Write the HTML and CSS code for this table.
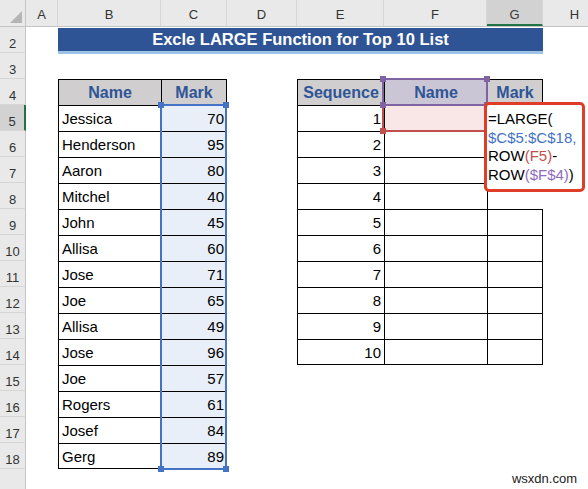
FILE: index.html
```html
<!DOCTYPE html>
<html lang="en">
<head>
<meta charset="utf-8">
<title>Excle LARGE Function for Top 10 List</title>
<link rel="stylesheet" href="styles.css">
</head>
<body>
<div class="sheet">
  <div class="colheads">
    <div class="corner w-rh"><span class="tri"></span></div>
    <div class="ch w-a">A</div>
    <div class="ch w-b">B</div>
    <div class="ch w-c">C</div>
    <div class="ch w-d">D</div>
    <div class="ch w-e">E</div>
    <div class="ch w-f">F</div>
    <div class="ch w-g sel">G</div>
    <div class="ch w-h">H</div>
  </div>
  <div class="body">
    <div class="rowheads">
      <div class="rh">2</div>
      <div class="rh">3</div>
      <div class="rh">4</div>
      <div class="rh sel">5</div>
      <div class="rh">6</div>
      <div class="rh">7</div>
      <div class="rh">8</div>
      <div class="rh">9</div>
      <div class="rh">10</div>
      <div class="rh">11</div>
      <div class="rh">12</div>
      <div class="rh">13</div>
      <div class="rh">14</div>
      <div class="rh">15</div>
      <div class="rh">16</div>
      <div class="rh">17</div>
      <div class="rh">18</div>
      <div class="rh last"></div>
    </div>
    <div class="cells">
      <div class="row">
        <div class="w-a"></div>
        <div class="title">Excle LARGE Function for Top 10 List</div>
      </div>
      <div class="row"></div>
      <div class="tables">
        <div class="w-a"></div>
        <div class="tbl t1">
          <div class="c hd">Name</div><div class="c hd lc">Mark</div>
          <div class="c nm">Jessica</div><div class="c num lc sb">70</div>
          <div class="c nm">Henderson</div><div class="c num lc sb">95</div>
          <div class="c nm">Aaron</div><div class="c num lc sb">80</div>
          <div class="c nm">Mitchel</div><div class="c num lc sb">40</div>
          <div class="c nm">John</div><div class="c num lc sb">45</div>
          <div class="c nm">Allisa</div><div class="c num lc sb">60</div>
          <div class="c nm">Jose</div><div class="c num lc sb">71</div>
          <div class="c nm">Joe</div><div class="c num lc sb">65</div>
          <div class="c nm">Allisa</div><div class="c num lc sb">49</div>
          <div class="c nm">Jose</div><div class="c num lc sb">96</div>
          <div class="c nm">Joe</div><div class="c num lc sb">57</div>
          <div class="c nm">Rogers</div><div class="c num lc sb">61</div>
          <div class="c nm">Josef</div><div class="c num lc sb">84</div>
          <div class="c nm lr">Gerg</div><div class="c num lc lr sb">89</div>
        </div>
        <div class="w-d"></div>
        <div class="tbl t2">
          <div class="c hd">Sequence</div><div class="c hd ref-hd">Name</div><div class="c hd lc">Mark</div>
          <div class="c num">1</div><div class="c ref-cell"></div><div class="c bare"></div>
          <div class="c num">2</div><div class="c"></div><div class="c bare"></div>
          <div class="c num">3</div><div class="c"></div><div class="c bare"></div>
          <div class="c num">4</div><div class="c"></div><div class="c bare"></div>
          <div class="c num">5</div><div class="c"></div><div class="c lc"></div>
          <div class="c num">6</div><div class="c"></div><div class="c lc"></div>
          <div class="c num">7</div><div class="c"></div><div class="c lc"></div>
          <div class="c num">8</div><div class="c"></div><div class="c lc"></div>
          <div class="c num">9</div><div class="c"></div><div class="c lc"></div>
          <div class="c num lr">10</div><div class="c lr"></div><div class="c lc lr"></div>
        </div>
      </div>
    </div>
  </div>

  <div class="selbox sel-blue">
    <span class="hdl tl"></span><span class="hdl tr"></span><span class="hdl bl"></span><span class="hdl br"></span>
  </div>
  <div class="selbox sel-red">
    <span class="hdl bl"></span>
  </div>
  <div class="selbox sel-purple">
    <span class="hdl tl"></span><span class="hdl tr"></span><span class="hdl bl"></span><span class="hdl br"></span>
  </div>

  <div class="formula">
    <div>=LARGE(</div>
    <div><span class="fb">$C$5:$C$18,</span></div>
    <div>ROW<span class="fr">(F5)</span>-</div>
    <div>ROW<span class="fp">($F$4)</span>)</div>
  </div>

  <div class="mark">wsxdn.com</div>
</div>
</body>
</html>
```

FILE: styles.css
```css
* {
  box-sizing: border-box;
  margin: 0;
  padding: 0;
}

body {
  margin: 0;
  width: 588px;
  height: 489px;
  overflow: hidden;
  background: #ffffff;
  font-family: "Liberation Sans", Arial, sans-serif;
  color: #000;
}

.sheet {
  position: relative;
  width: 588px;
  height: 489px;
  overflow: hidden;
}

/* column widths */
.w-rh { width: 26px; flex: none; }
.w-a { width: 32px; flex: none; }
.w-b { width: 103px; flex: none; }
.w-c { width: 66px; flex: none; }
.w-d { width: 70px; flex: none; }
.w-e { width: 87px; flex: none; }
.w-f { width: 103px; flex: none; }
.w-g { width: 56px; flex: none; }
.w-h { width: 64px; flex: none; }

/* column headers */
.colheads {
  display: flex;
  height: 27px;
  background: #e9e9e9;
  border-bottom: 1px solid #c4c4c4;
}

.corner {
  position: relative;
  border-right: 1px solid #c4c4c4;
}

.tri {
  position: absolute;
  right: 3px;
  bottom: 3px;
  width: 0;
  height: 0;
  border-left: 12px solid transparent;
  border-bottom: 12px solid #b5b5b5;
}

.ch {
  text-align: center;
  font-size: 13px;
  line-height: 20px;
  padding-top: 5px;
  color: #333;
  border-right: 1px solid #d6d6d6;
}

.ch.sel {
  background: #d2d2d2;
  border-bottom: 2px solid #217346;
  color: #3a3a3a;
}

/* body */
.body {
  display: flex;
  height: 462px;
}

.rowheads {
  width: 26px;
  flex: none;
  display: flex;
  flex-direction: column;
  background: #e9e9e9;
}

.rh {
  height: 26px;
  flex: none;
  text-align: center;
  font-size: 13px;
  line-height: 20px;
  padding-top: 7px;
  color: #333;
  border-bottom: 1px solid #d6d6d6;
  border-right: 1px solid #c4c4c4;
}

.rh.sel {
  background: #d2d2d2;
  border-right: 2px solid #217346;
}

.rh.last {
  flex: 1;
  border-bottom: none;
}

.cells {
  flex: 1;
  display: flex;
  flex-direction: column;
}

.row {
  display: flex;
  height: 26px;
  flex: none;
}

.title {
  width: 485px;
  height: 26px;
  margin-top: 1px;
  background: #2f5496;
  border-bottom: 3px solid #9dc3e6;
  color: #fff;
  font-weight: bold;
  font-size: 16.5px;
  line-height: 23px;
  text-align: center;
}

.tables {
  display: flex;
  align-items: flex-start;
}

.tbl {
  display: grid;
  grid-auto-rows: 26px;
  flex: none;
}

.t1 { grid-template-columns: 103px 66px; }
.t2 { grid-template-columns: 87px 103px 56px; }

.c {
  border-top: 1px solid #000;
  border-left: 1px solid #000;
  font-size: 15px;
  line-height: 25px;
  white-space: nowrap;
  overflow: hidden;
}

.c.lc { border-right: 1px solid #000; }
.c.lr { border-bottom: 1px solid #000; }

.c.hd {
  background: #d0cece;
  color: #2f5597;
  font-weight: bold;
  font-size: 16px;
  text-align: center;
}

.c.ref-hd { background: #cac6d6; }
.c.ref-cell { background: #f9e7e8; }

.c.nm { padding-left: 3px; }
.c.num { text-align: right; padding-right: 3px; }
.c.sb { background: #e9eff9; padding-right: 2px; }

.c.bare { border-top: none; }

/* selection outlines over the grid */
.selbox {
  position: absolute;
  border: 2px solid;
}

.sel-blue {
  left: 160px;
  top: 104px;
  width: 67px;
  height: 366px;
  border-color: #4472c4;
}

.sel-red {
  left: 382px;
  top: 104px;
  width: 106px;
  height: 28px;
  border-color: #c0504d;
}

.sel-purple {
  left: 382px;
  top: 78px;
  width: 106px;
  height: 28px;
  border-color: #8064a2;
}

.hdl {
  position: absolute;
  width: 6px;
  height: 6px;
}

.sel-blue .hdl { background: #4472c4; }
.sel-red .hdl { background: #c0504d; }
.sel-purple .hdl { background: #8064a2; }

.hdl.tl { left: -4px; top: -4px; }
.hdl.tr { right: -4px; top: -4px; }
.hdl.bl { left: -4px; bottom: -4px; }
.hdl.br { right: -4px; bottom: -4px; }

/* formula callout */
.formula {
  position: absolute;
  left: 484px;
  top: 102px;
  width: 101px;
  height: 90px;
  background: #fff;
  border: 3px solid #e03c26;
  border-radius: 5px;
  padding: 5px 0 0 1px;
  font-size: 15px;
  line-height: 18.5px;
  color: #000;
  white-space: nowrap;
}

.fb { color: #4472c4; }
.fr { color: #c0504d; }
.fp { color: #8f6bc0; }

.mark {
  position: absolute;
  right: 11px;
  top: 471px;
  font-size: 13px;
  line-height: 15px;
  color: #222;
}
```
